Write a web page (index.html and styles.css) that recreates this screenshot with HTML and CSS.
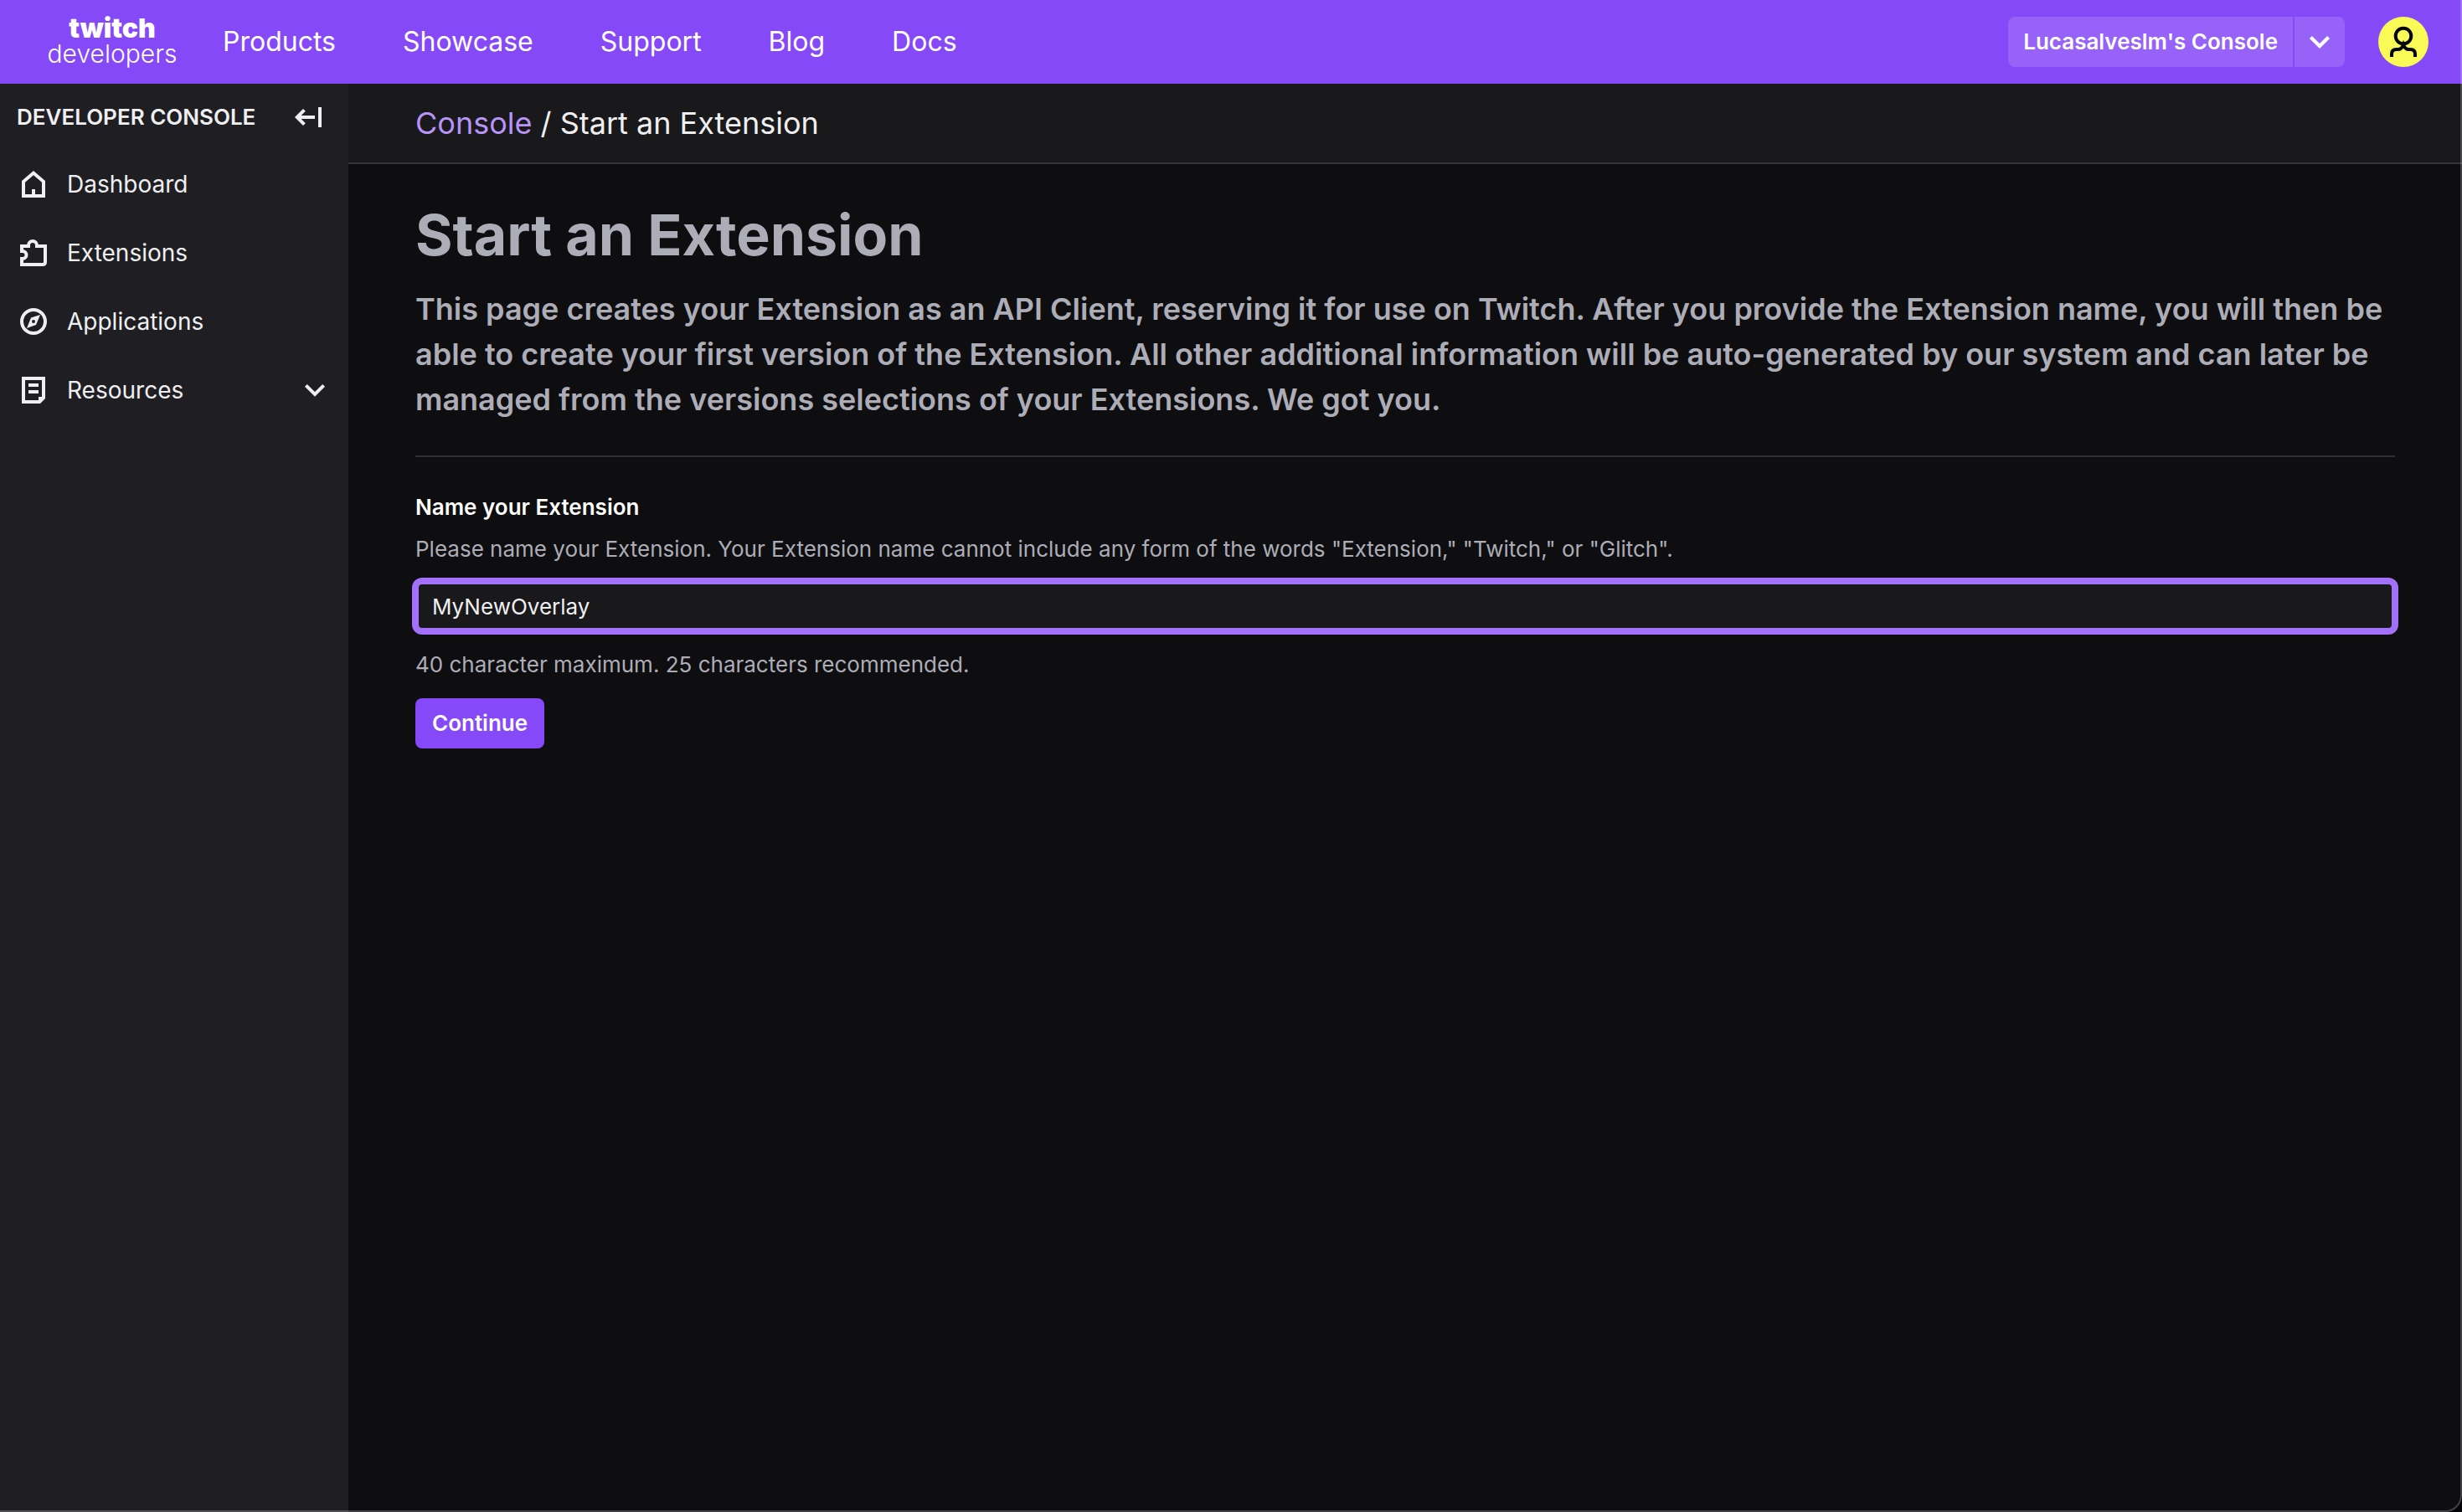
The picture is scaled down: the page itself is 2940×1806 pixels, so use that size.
FILE: index.html
```html
<!DOCTYPE html>
<html lang="en">
<head>
<meta charset="utf-8">
<title>Start an Extension - Twitch Developers</title>
<link rel="stylesheet" href="styles.css">
</head>
<body>
<header class="topbar">
  <a class="logo" href="#"><span class="logo-brand">twitch</span><span class="logo-sub">developers</span></a>
  <nav class="topnav">
    <a href="#">Products</a>
    <a href="#">Showcase</a>
    <a href="#">Support</a>
    <a href="#">Blog</a>
    <a href="#">Docs</a>
  </nav>
  <div class="account">
    <div class="split">
      <button class="split-main" type="button">Lucasalveslm's Console</button>
      <button class="split-caret" type="button" aria-label="Choose console">
        <svg class="icon" viewBox="0 0 20 20"><path d="M4.7 7.2 10 12.5l5.3-5.3" fill="none" stroke="currentColor" stroke-width="2.1"/></svg>
      </button>
    </div>
    <button class="avatar" type="button" aria-label="Account">
      <svg viewBox="0 0 60 60"><circle cx="30" cy="30" r="30" fill="#fafa56"/><g fill="none" stroke="#050505" stroke-width="4"><circle cx="30" cy="23" r="9.300"/><path d="M16 48v-3.500q0-5.500 5.500-5.500h2q4.500 0 6.500-5.500 2 5.500 6.500 5.500h2q5.500 0 5.500 5.500V48"/></g></svg>
    </button>
  </div>
</header>
<div class="shell">
  <aside class="sidebar">
    <div class="side-head">
      <h2>Developer Console</h2>
      <button class="collapse" type="button" aria-label="Collapse sidebar">
        <svg class="icon" viewBox="0 0 20 20"><path d="M8.700 5.700 4.400 10l4.300 4.300M4.400 10H15M18 4v12" fill="none" stroke="currentColor" stroke-width="2"/></svg>
      </button>
    </div>
    <nav class="side-nav">
      <a href="#">
        <svg class="icon" viewBox="0 0 20 20"><path fill="currentColor" fill-rule="evenodd" d="M10 2 3 8v10h14V8l-7-6Zm5 14h-4v-3H9v3H5V8.900l5-4.300 5 4.300V16Z"/></svg>
        <span>Dashboard</span>
      </a>
      <a href="#">
        <svg class="icon" viewBox="0 0 20 20"><path fill="none" stroke="currentColor" stroke-width="2" d="M3 10V6h4V5.500a2.500 2.500 0 0 1 5 0V6h5v9.500q0 1.500-1.500 1.500H3v-3.500h.5a2.250 2.250 0 0 0 0-4.500H2"/></svg>
        <span>Extensions</span>
      </a>
      <a href="#">
        <svg class="icon" viewBox="0 0 20 20"><circle cx="10" cy="10" r="7" fill="none" stroke="currentColor" stroke-width="2"/><path fill="currentColor" fill-rule="evenodd" d="m14 6-5.500 1.800L6 14l5.500-2L14 6Zm-4 3a1 1 0 1 1 0 2 1 1 0 0 1 0-2Z"/></svg>
        <span>Applications</span>
      </a>
      <a href="#">
        <svg class="icon" viewBox="0 0 20 20"><path fill="currentColor" fill-rule="evenodd" d="M3 2h14v13l-3 3H3V2Zm2 2h10v10h-2v2H5V4Zm2 2h6v2H7V6Zm0 4h6v2H7v-2Z"/></svg>
        <span>Resources</span>
        <svg class="icon caret" viewBox="0 0 20 20"><path d="M4.700 7.200 10 12.500l5.300-5.300" fill="none" stroke="currentColor" stroke-width="2"/></svg>
      </a>
    </nav>
  </aside>
  <main class="main">
    <nav class="crumbs" aria-label="Breadcrumb"><a href="#">Console</a> / Start an Extension</nav>
    <div class="content">
      <h1>Start an Extension</h1>
      <p class="intro">This page creates your Extension as an API Client, reserving it for use on Twitch. After you provide the Extension name, you will then be able to create your first version of the Extension. All other additional information will be auto-generated by our system and can later be managed from the versions selections of your Extensions. We got you.</p>
      <form class="form">
        <label for="ext-name">Name your Extension</label>
        <p class="hint" id="ext-hint">Please name your Extension. Your Extension name cannot include any form of the words "Extension," "Twitch," or "Glitch".</p>
        <input id="ext-name" type="text" value="MyNewOverlay" maxlength="40" aria-describedby="ext-hint">
        <p class="hint">40 character maximum. 25 characters recommended.</p>
        <button class="primary" type="button">Continue</button>
      </form>
    </div>
  </main>
</div>
</body>
</html>
```
FILE: styles.css
```css
* { box-sizing: border-box; }
body {
  margin: 0;
  min-height: 100vh;
  display: flex;
  flex-direction: column;
  background: #0e0e10;
  color: #efeff1;
  font-family: Inter, "Liberation Sans", sans-serif;
  font-size: 26px;
  line-height: 40px;
}
/* window edge */
body::after {
  content: "";
  position: fixed;
  inset: -2px 0 0 -2px;
  border: 2px solid rgba(255, 255, 255, 0.22);
  border-bottom-right-radius: 20px;
  box-shadow: 0 0 0 20px #020307;
  pointer-events: none;
}
h1, h2, p { margin: 0; }
a { color: inherit; text-decoration: none; }
button { font: inherit; color: inherit; border: 0; padding: 0; background: none; cursor: pointer; }
.icon { width: 40px; height: 40px; display: block; flex: none; }

.topbar {
  height: 100px;
  display: flex;
  align-items: center;
  padding: 0 40px 0 56px;
  background: #8649f8;
  color: #fff;
}
.logo { width: 156px; display: flex; flex-direction: column; align-items: center; }
.logo-brand { font-size: 32px; font-weight: 900; line-height: 28px; }
.logo-sub { font-size: 30px; font-weight: 300; line-height: 32px; }
.topnav { display: flex; gap: 80px; margin-left: 54px; font-size: 32px; }
.account { display: flex; gap: 40px; margin-left: auto; }
.split { display: flex; gap: 2px; font-weight: 600; }
.split button { height: 60px; background: #9762f8; }
.split-main { padding: 0 18px; border-radius: 8px 0 0 8px; }
.split-caret { padding: 0 10px; border-radius: 0 8px 8px 0; }
.avatar { width: 60px; height: 60px; }
.avatar svg { display: block; }

.shell { flex: 1; display: flex; }
.sidebar { width: 416px; flex: none; background: #1f1f23; padding: 20px; }
.side-head { display: flex; align-items: center; justify-content: space-between; padding-right: 10px; }
.side-head h2 { font-size: 26px; font-weight: 600; line-height: 40px; text-transform: uppercase; }
.side-nav { display: flex; flex-direction: column; gap: 42px; margin-top: 40px; font-size: 28px; }
.side-nav a { display: flex; align-items: center; gap: 20px; }
.caret { margin-left: auto; }

.main { flex: 1; min-width: 0; }
.crumbs {
  padding: 20px 80px;
  background: #19191b;
  border-bottom: 2px solid #35343b;
  font-size: 36px;
  line-height: 54px;
}
.crumbs a { color: #b794f8; }
.content { padding: 40px 80px; }
h1 { font-size: 68px; line-height: 88px; font-weight: 700; color: #adadb8; }
.intro {
  margin-top: 18px;
  padding-bottom: 40px;
  border-bottom: 2px solid #2f2e35;
  color: #adadb8;
  font-size: 36px;
  line-height: 54px;
  font-weight: 600;
}
.form { display: flex; flex-direction: column; align-items: flex-start; margin-top: 40px; }
.form label { font-weight: 600; color: #fff; }
.hint { margin-top: 10px; color: #adadb8; }
.form input {
  width: 100%;
  height: 60px;
  margin: 18px 0 10px;
  padding: 0 16px;
  border: 4px solid #a370f9;
  border-radius: 8px;
  box-shadow: 0 0 0 4px #a370f9;
  background: #19191b;
  color: #efeff1;
  font: inherit;
  outline: none;
}
.primary {
  height: 60px;
  margin-top: 20px;
  padding: 0 20px;
  border-radius: 8px;
  background: #8649f8;
  color: #fff;
  font-weight: 600;
}
```
